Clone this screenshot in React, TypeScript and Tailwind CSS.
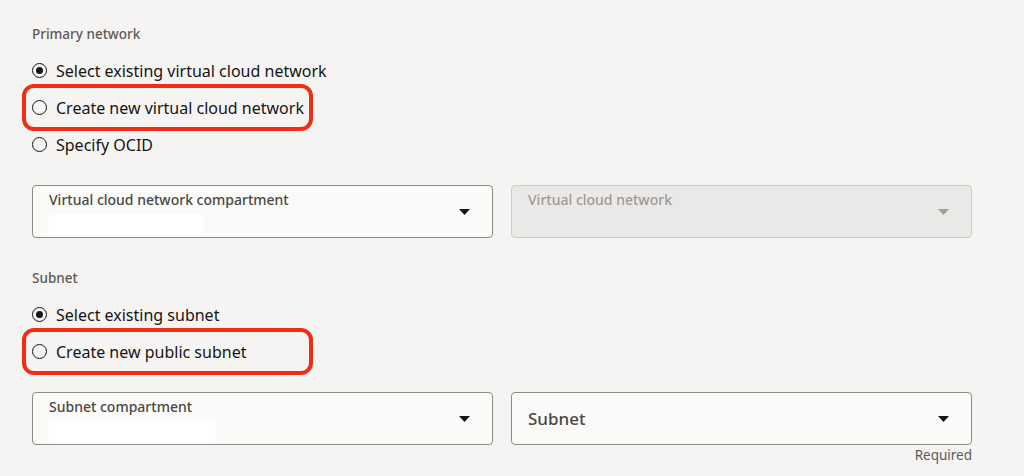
const Caret = ({ muted = false }: { muted?: boolean }) => (
  <svg width="11" height="6" viewBox="0 0 11 6" className="shrink-0">
    <path d="M0 0h11L5.5 6z" fill={muted ? '#a19d98' : '#161513'} />
  </svg>
);

const Radio = ({ checked, label, marked = false }: { checked?: boolean; label: string; marked?: boolean }) => (
  <div className="relative flex h-[37px] items-center">
    {marked && (
      <span className="absolute left-[-10px] top-[-5px] h-[47px] w-[291px] rounded-[12px] border-4 border-[#ef2e14]" />
    )}
    <span className="flex h-[15px] w-[15px] items-center justify-center rounded-full border-[1.5px] border-[#161513]">
      {checked && <span className="h-[7px] w-[7px] rounded-full bg-[#161513]" />}
    </span>
    <span className="ml-[9px] text-[16px] text-[#161513]">{label}</span>
  </div>
);

const Select = ({ label, redacted, disabled = false, wide }: { label: string; redacted?: number; disabled?: boolean; wide?: boolean }) => (
  <div
    className={
      disabled
        ? 'flex h-[53px] flex-1 items-center justify-between rounded-[4px] border border-[#cfcbc6] bg-[#ebe9e7] pl-4 pr-[22px]'
        : 'flex h-[53px] flex-1 items-center justify-between rounded-[4px] border border-[#8e8a85] bg-[#fafaf9] pl-4 pr-[22px]'
    }
  >
    {wide ? (
      <span className="text-[17px] font-medium text-[#4a4845]">{label}</span>
    ) : (
      <div className="flex h-full flex-col pt-[3px]">
        <span className={disabled ? 'text-[14px] font-medium text-[#9e9a95]' : 'text-[14px] font-medium text-[#4a4845]'}>
          {label}
        </span>
        {redacted && <span className="ml-[-2px] mt-[4px] h-[21px] rounded-[8px] bg-white" style={{ width: redacted }} />}
      </div>
    )}
    <Caret muted={disabled} />
  </div>
);

export default function App() {
  return (
    <div className="h-[476px] w-[1024px] bg-[#f5f4f2] pl-8 pt-[25px]" style={{ fontFamily: '"Noto Sans", sans-serif' }}>
      <div className="w-[940px]">
        <h2 className="h-[18px] text-[13.5px] font-medium leading-[18px] text-[#5c5a57]">Primary network</h2>
        <div className="mt-[9px]">
          <Radio checked label="Select existing virtual cloud network" />
          <Radio label="Create new virtual cloud network" marked />
          <Radio label="Specify OCID" />
        </div>
        <div className="mt-[22px] flex gap-[18px]">
          <Select label="Virtual cloud network compartment" redacted={158} />
          <Select label="Virtual cloud network" disabled />
        </div>

        <h2 className="mt-[31px] h-[18px] text-[13.5px] font-medium leading-[18px] text-[#5c5a57]">Subnet</h2>
        <div className="mt-[9px]">
          <Radio checked label="Select existing subnet" />
          <Radio label="Create new public subnet" marked />
        </div>
        <div className="mt-[22px] flex gap-[18px]">
          <Select label="Subnet compartment" redacted={170} />
          <Select label="Subnet" wide />
        </div>
        <p className="text-right text-[13.5px] leading-[20px] text-[#5c5a57]">Required</p>
      </div>
    </div>
  );
}
